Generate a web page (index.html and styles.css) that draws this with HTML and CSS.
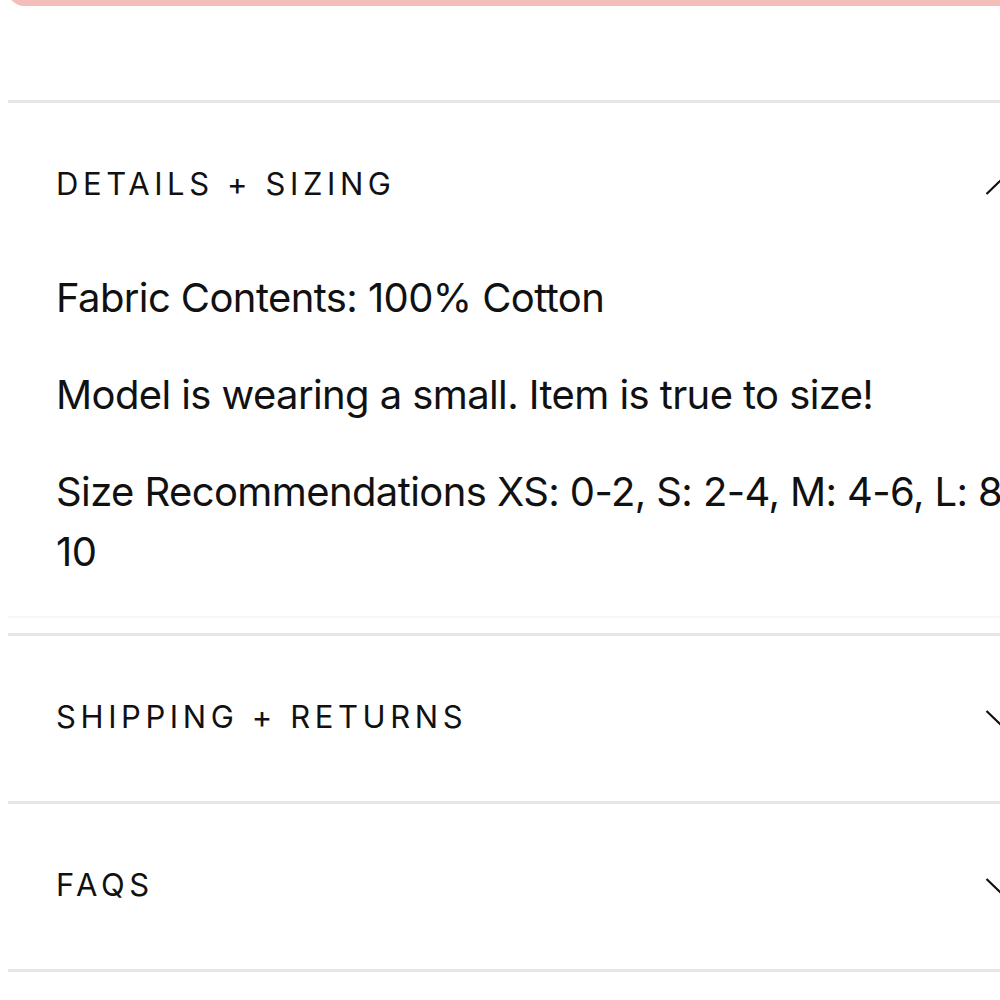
FILE: index.html
```html
<!DOCTYPE html>
<html lang="en">
<head>
<meta charset="utf-8">
<title>Product details</title>
<link rel="stylesheet" href="styles.css">
</head>
<body>
<div class="page">
  <div class="cta"></div>

  <section class="acc open">
    <div class="acc-head">
      <span class="acc-title">DETAILS + SIZING</span>
      <svg class="chev" viewBox="0 0 36 18" width="36" height="18"><polyline points="1.5,17 18,1 34.5,17" /></svg>
    </div>
    <div class="acc-body">
      <p>Fabric Contents: 100% Cotton</p>
      <p>Model is wearing a small. Item is true to size!</p>
      <p>Size Recommendations XS: 0-2, S: 2-4, M: 4-6, L: 8-10</p>
    </div>
  </section>

  <section class="acc">
    <div class="acc-head">
      <span class="acc-title">SHIPPING + RETURNS</span>
      <svg class="chev" viewBox="0 0 36 18" width="36" height="18"><polyline points="1.5,1 18,17 34.5,1" /></svg>
    </div>
  </section>

  <section class="acc">
    <div class="acc-head">
      <span class="acc-title">FAQS</span>
      <svg class="chev" viewBox="0 0 36 18" width="36" height="18"><polyline points="1.5,1 18,17 34.5,1" /></svg>
    </div>
  </section>
  <div class="end-rule"></div>
</div>
</body>
</html>
```

FILE: styles.css
```css
html, body {
  margin: 0;
  padding: 0;
  background: #ffffff;
  overflow: hidden;
}

body {
  font-family: Inter, "Noto Sans", "Liberation Sans", sans-serif;
  color: #111111;
}

.page {
  margin-left: 8px;
  width: 1061px;
}

.cta {
  height: 48px;
  margin-top: -42px;
  margin-bottom: 94px;
  background: #f3bdb8;
  border-radius: 16px;
}

.acc {
  border-top: 3px solid #e6e6e6;
}

.acc.open {
  margin-bottom: 15px;
}

.acc-head {
  height: 161px;
  padding: 0 48px 4px;
  display: flex;
  align-items: center;
  justify-content: space-between;
}

.acc-title {
  font-size: 31px;
  letter-spacing: 4.6px;
  font-weight: 400;
}

.chev {
  display: block;
  fill: none;
  stroke: #111111;
  stroke-width: 2.2;
  margin-top: 4px;
}

.acc-body {
  padding: 0 48px 34px;
  border-bottom: 2px solid #f6f6f6;
}

.acc-body p {
  margin: 0 0 37px;
  font-size: 40px;
  line-height: 60px;
  letter-spacing: -0.6px;
}

.acc-body p:last-child {
  margin-bottom: 0;
}

.end-rule {
  border-top: 3px solid #e6e6e6;
}
```
